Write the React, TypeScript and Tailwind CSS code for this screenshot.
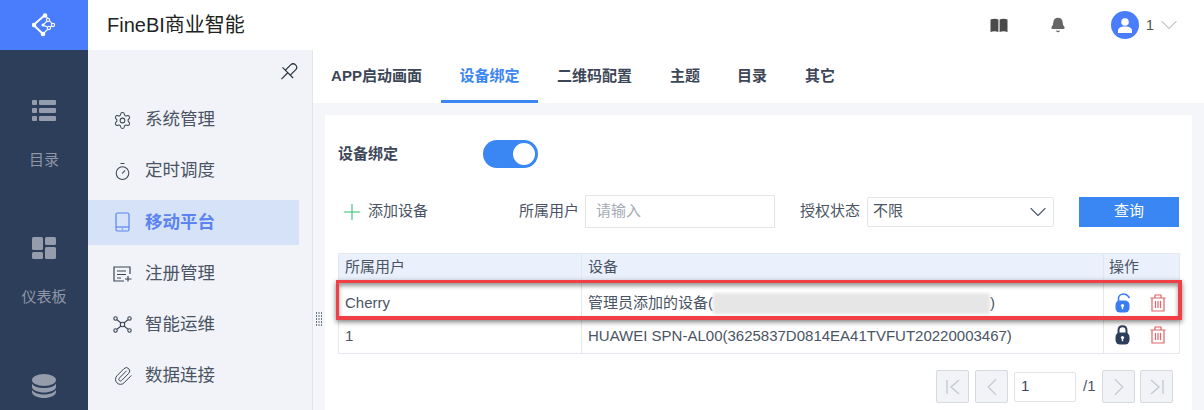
import { ReactNode } from 'react';
import { Bell, ChevronDown, ChevronLeft, ChevronRight, Plus, Settings, Timer, Paperclip } from 'lucide-react';

const fontStack = "font-['Liberation_Sans','Noto_Sans_CJK_SC',sans-serif]";

function Logo() {
  return (
    <svg width="24" height="24" viewBox="0 0 24 24" fill="none" stroke="#fff" strokeWidth="1.1">
      <path d="M13 2 L1.5 12 L11 21" strokeWidth="2" />
      <path d="M13 2 L21 12 L17 15 L11 21 M16 7 L11 12 L17 15" />
      <circle cx="13" cy="2.5" r="2.3" fill="#fff" stroke="none" />
      <circle cx="2" cy="12" r="2.3" fill="#fff" stroke="none" />
      <circle cx="11" cy="21" r="2.3" fill="#fff" stroke="none" />
      <circle cx="11" cy="12" r="1.5" fill="#fff" stroke="none" />
      <circle cx="16" cy="7" r="1.6" fill="#4a7dfc" />
      <circle cx="21" cy="12" r="1.6" fill="#4a7dfc" />
      <circle cx="17" cy="15" r="1.6" fill="#4a7dfc" />
    </svg>
  );
}

function ListIcon() {
  return (
    <svg width="24" height="21" viewBox="0 0 24 21" fill="#959cab">
      <rect x="0" y="0" width="5" height="5" rx="1" />
      <rect x="7" y="0" width="17" height="5" rx="1" />
      <rect x="0" y="8" width="5" height="5" rx="1" />
      <rect x="7" y="8" width="17" height="5" rx="1" />
      <rect x="0" y="16" width="5" height="5" rx="1" />
      <rect x="7" y="16" width="17" height="5" rx="1" />
    </svg>
  );
}

function BoardIcon() {
  return (
    <svg width="24" height="22" viewBox="0 0 24 22" fill="#959cab">
      <rect x="0" y="0" width="11" height="13" rx="1.5" />
      <rect x="13" y="0" width="11" height="8" rx="1.5" />
      <rect x="0" y="15" width="11" height="7" rx="1.5" />
      <rect x="13" y="10" width="11" height="12" rx="1.5" />
    </svg>
  );
}

function DbIcon() {
  return (
    <svg width="24" height="24" viewBox="0 0 24 24" fill="#959cab">
      <ellipse cx="12" cy="6" rx="12" ry="6" />
      <path d="M0 9.5 C2 13 7 14 12 14 C17 14 22 13 24 9.5 V13 C24 16 18 18.5 12 18.5 C6 18.5 0 16 0 13 Z" />
      <path d="M0 16 C2 19 7 20.5 12 20.5 C17 20.5 22 19 24 16 V18 C24 21.5 18 24 12 24 C6 24 0 21.5 0 18 Z" />
    </svg>
  );
}

function BookIcon() {
  return (
    <svg width="18" height="15" viewBox="0 0 18 15" fill="#4a4a4a">
      <path d="M0.5 1.5 C3 0.5 6 0.5 8.4 1.5 V14 C6 13 3 13 0.5 14 Z" />
      <path d="M9.6 1.5 C12 0.5 15 0.5 17.5 1.5 V14 C15 13 12 13 9.6 14 Z" />
    </svg>
  );
}

function PinIcon() {
  return (
    <svg width="19" height="20" viewBox="0 0 19 20" fill="none" stroke="#2c3444" strokeWidth="1.2">
      <g transform="rotate(45 9.5 10)">
        <path d="M6 11 V3.5 C6 1.5 7.5 0 9.5 0 C11.5 0 13 1.5 13 3.5 V11" />
        <path d="M2 11 H17 M9.5 11 V20" />
      </g>
    </svg>
  );
}

function PhoneIcon() {
  return (
    <svg width="15" height="20" viewBox="0 0 15 20" fill="none" stroke="#5b84f0" strokeWidth="1.2">
      <rect x="1" y="1" width="13" height="18" rx="1.5" />
      <path d="M1 15 H14" />
      <circle cx="7.5" cy="17" r="0.8" fill="#5b84f0" stroke="none" />
    </svg>
  );
}

function RegisterIcon() {
  return (
    <svg width="19" height="16" viewBox="0 0 19 16" fill="none" stroke="#3c4657" strokeWidth="1.2">
      <path d="M17 8 V1 H1 V15 H11" />
      <path d="M4 5 H13 M4 8.5 H13 M4 12 H8" />
      <path d="M15 10 V15.5 M12 13 H18.5" />
    </svg>
  );
}

function OpsIcon() {
  return (
    <svg width="19" height="17" viewBox="0 0 19 17" fill="none" stroke="#3c4657" strokeWidth="1.1">
      <circle cx="2.5" cy="2.5" r="1.7" />
      <circle cx="16.5" cy="2.5" r="1.7" />
      <circle cx="2.5" cy="14.5" r="1.7" />
      <circle cx="16.5" cy="14.5" r="1.7" />
      <circle cx="9.5" cy="8.5" r="2.2" />
      <path d="M4 3.8 L8 7 M15 3.8 L11 7 M4 13.2 L8 10 M15 13.2 L11 10" />
    </svg>
  );
}

function Grip() {
  return (
    <svg width="6" height="15" viewBox="0 0 6 15" fill="#6b7280">
      {[0, 3, 6, 9, 12].map((y) => (
        <g key={y}>
          <rect x="0" y={y} width="1" height="2" />
          <rect x="2.5" y={y} width="1" height="2" />
          <rect x="5" y={y} width="1" height="2" />
        </g>
      ))}
    </svg>
  );
}

function LockIcon({ open, color }: { open?: boolean; color: string }) {
  return (
    <svg width="17" height="20" viewBox="0 0 17 20" fill="none">
      {open ? (
        <path d="M4.5 9 V5.5 C4.5 3 6.5 1 9.5 1 C12 1 14 2.5 15.5 5" stroke={color} strokeWidth="1.6" />
      ) : (
        <path d="M4.5 9 V5.5 C4.5 3 6 1.2 8.5 1.2 C11 1.2 12.5 3 12.5 5.5 V9" stroke={color} strokeWidth="2" />
      )}
      <rect x="1.5" y="7.5" width="14" height="12" rx="4.5" fill={color} />
      <circle cx="8.5" cy="12.5" r="1.6" fill="#fff" />
      <rect x="7.8" y="13" width="1.4" height="3.2" fill="#fff" />
    </svg>
  );
}

function TrashIcon() {
  return (
    <svg width="16" height="18" viewBox="0 0 16 18" fill="none" stroke="#e0656a" strokeWidth="1.2">
      <path d="M0.5 4 H15.5 M5 4 V1 H11 V4" />
      <path d="M2 4 V17 H14 V4" />
      <path d="M5.5 7 V14 M8 7 V14 M10.5 7 V14" />
    </svg>
  );
}

function PageFirst({ flip }: { flip?: boolean }) {
  return (
    <svg width="16" height="16" viewBox="0 0 16 16" fill="none" stroke="#c3c8d2" strokeWidth="1.3" className={flip ? 'rotate-180' : ''}>
      <path d="M2 1 V15 M14 1 L6 8 L14 15" />
    </svg>
  );
}

const menu: { label: string; icon: ReactNode; active?: boolean }[] = [
  { label: '系统管理', icon: <Settings size={19} strokeWidth={1.3} color="#3c4657" /> },
  { label: '定时调度', icon: <Timer size={19} strokeWidth={1.3} color="#3c4657" /> },
  { label: '移动平台', icon: <PhoneIcon />, active: true },
  { label: '注册管理', icon: <RegisterIcon /> },
  { label: '智能运维', icon: <OpsIcon /> },
  { label: '数据连接', icon: <Paperclip size={20} strokeWidth={1.2} color="#3c4657" /> },
];

const tabs = [
  { label: 'APP启动画面', pad: 'ml-[18px] w-[91px]' },
  { label: '设备绑定', pad: 'ml-[19px] w-[97px]', active: true },
  { label: '二维码配置', pad: 'ml-[19px] w-[75px]' },
  { label: '主题', pad: 'ml-[38px] w-[30px]' },
  { label: '目录', pad: 'ml-[37px] w-[30px]' },
  { label: '其它', pad: 'ml-[38px] w-[30px]' },
];

function PageBtn({ children }: { children: ReactNode }) {
  return (
    <div className="w-[33px] h-[33px] flex items-center justify-center rounded-[2px] border border-[#d5d9e0] bg-[#f1f3f7]">
      {children}
    </div>
  );
}

export default function App() {
  return (
    <div className={`${fontStack} w-[1204px] h-[410px] overflow-hidden flex bg-white text-[#3c4657]`}>
      {/* dark rail */}
      <aside className="w-[88px] shrink-0 bg-[#2c3e5a] flex flex-col items-center">
        <div className="w-full h-[50px] bg-[#4a7dfc] flex items-center justify-center">
          <Logo />
        </div>
        <div className="mt-[50px] flex flex-col items-center">
          <ListIcon />
          <span className="mt-[29px] text-[15px] leading-[20px] text-[#8f96a5]">目录</span>
        </div>
        <div className="mt-[67px] flex flex-col items-center">
          <BoardIcon />
          <span className="mt-[28px] text-[15px] leading-[20px] text-[#8f96a5]">仪表板</span>
        </div>
        <div className="mt-[67px]">
          <DbIcon />
        </div>
      </aside>

      <div className="flex-1 flex flex-col min-w-0">
        {/* header */}
        <header className="h-[50px] shrink-0 flex items-center pl-[19px] bg-white">
          <span className="text-[20px] text-[#222]">FineBI商业智能</span>
          <span className="ml-auto"><BookIcon /></span>
          <Bell size={16} fill="#666" color="#666" className="ml-[42px]" />
          <div className="ml-[45px] w-[28px] h-[28px] rounded-full bg-[#4a7dfc] flex items-center justify-center">
            <svg width="14" height="15" viewBox="0 0 14 15" fill="#fff">
              <circle cx="7" cy="4" r="3.8" />
              <path d="M0 15 V12.5 C0 10 3 8.5 7 8.5 C11 8.5 14 10 14 12.5 V15 Z" />
            </svg>
          </div>
          <span className="ml-[7px] text-[15px] text-[#555]">1</span>
          <ChevronDown size={28} strokeWidth={0.8} color="#999" className="ml-[1px] mr-[21px]" />
        </header>

        <div className="flex-1 flex min-h-0">
          {/* menu */}
          <nav className="w-[224px] shrink-0 bg-[#f1f3f8] flex flex-col">
            <div className="h-[47.6px] flex items-start justify-end pr-[14px] pt-[12px]">
              <PinIcon />
            </div>
            <ul className="flex flex-col gap-[6.2px]">
              {menu.map((m) => (
                <li
                  key={m.label}
                  className={`h-[45px] w-[211px] flex items-center ${m.active ? 'bg-[#d6e2f8]' : ''}`}
                >
                  <span className="w-[57px] flex justify-center pl-[12px]">{m.icon}</span>
                  <span className={`text-[17.5px] ${m.active ? 'font-bold text-[#5b84f0]' : 'pb-[2px] text-[#4a5464]'}`}>
                    {m.label}
                  </span>
                </li>
              ))}
            </ul>
          </nav>

          {/* resize strip */}
          <div className="w-[1px] bg-[#e3e5ea] relative">
            <div className="absolute left-[4px] top-[262px]">
              <Grip />
            </div>
          </div>

          {/* main */}
          <main className="flex-1 min-w-0 flex flex-col bg-[#f5f6f9]">
            <div className="h-[53px] shrink-0 bg-white flex items-stretch">
              {tabs.map((t) => (
                <div
                  key={t.label}
                  className={`${t.pad} h-full flex items-center justify-center whitespace-nowrap text-[15px] font-bold ${
                    t.active ? 'text-[#3a86f2] border-b-[3px] border-[#3a86f2] pt-[3px]' : 'text-[#3c4657]'
                  }`}
                >
                  {t.label}
                </div>
              ))}
            </div>

            <div className="mt-[12px] ml-[12px] mr-[12px] flex-1 bg-white pl-[13px] pr-[13px] relative">
              <div className="h-[28px] mt-[25px] flex items-center">
                <span className="w-[145px] text-[15px] font-bold text-[#3c4657]">设备绑定</span>
                <div className="w-[55px] h-[28px] rounded-full bg-[#3a86f2] flex items-center justify-end pr-[3px]">
                  <div className="w-[22px] h-[22px] rounded-full bg-white" />
                </div>
              </div>

              <div className="mt-[27px] h-[33px] flex items-center relative">
                <Plus size={26} strokeWidth={1} color="#2fbf71" className="ml-[1px]" />
                <span className="ml-[3px] text-[15px] text-[#4a5464]">添加设备</span>
                <span className="ml-[91px] text-[15px] text-[#4a5464]">所属用户</span>
                <div className="ml-[6px] w-[190px] h-[33px] border border-[#e3e5ea] flex items-center pl-[10px] text-[15px] text-[#a5abb6]">
                  请输入
                </div>
                <span className="ml-[25px] text-[15px] text-[#4a5464]">授权状态</span>
                <div className="ml-[7px] w-[187px] h-[30px] border border-[#e3e5ea] rounded-[2px] flex items-center pl-[5px] pr-[1px] text-[15px] text-[#4a5464]">
                  不限
                  <ChevronDown size={28} strokeWidth={1} color="#555e6e" className="ml-auto" />
                </div>
                <button className="ml-[25px] w-[100px] h-[30px] bg-[#3a86f2] text-white text-[15px]">查询</button>
              </div>

              <table className="mt-[25px] w-[841px] table-fixed border-collapse text-[15px] text-[#4a5464]">
                <colgroup>
                  <col className="w-[243px]" />
                  <col className="w-[522px]" />
                  <col className="w-[76px]" />
                </colgroup>
                <thead>
                  <tr className="h-[28px] bg-[#eaf1fc]">
                    <th className="border border-[#e3e7ee] px-[6px] text-left font-normal">所属用户</th>
                    <th className="border border-[#e3e7ee] px-[6px] text-left font-normal">设备</th>
                    <th className="border border-[#e3e7ee] px-[5px] text-left font-normal">操作</th>
                  </tr>
                </thead>
                <tbody>
                  <tr className="h-[38px]">
                    <td className="border border-[#e3e7ee] px-[6px] pt-[5px]">Cherry</td>
                    <td className="border border-[#e3e7ee] px-[6px] pt-[5px] whitespace-nowrap">
                      <span className="inline-flex items-center">
                        管理员添加的设备(
                        <span className="inline-block w-[277px] h-[21px] bg-[#e6e6e6] blur-[1.5px]" />
                        )
                      </span>
                    </td>
                    <td className="border border-[#e3e7ee] pl-[10px] pt-[5px]">
                      <div className="flex items-center gap-[19px]">
                        <LockIcon open color="#3a7df2" />
                        <TrashIcon />
                      </div>
                    </td>
                  </tr>
                  <tr className="h-[34px]">
                    <td className="border border-[#e3e7ee] px-[6px]">1</td>
                    <td className="border border-[#e3e7ee] px-[6px] whitespace-nowrap">
                      HUAWEI SPN-AL00(3625837D0814EA41TVFUT20220003467)
                    </td>
                    <td className="border border-[#e3e7ee] pl-[10px] pb-[3px]">
                      <div className="flex items-center gap-[19px]">
                        <LockIcon color="#2c3e5a" />
                        <TrashIcon />
                      </div>
                    </td>
                  </tr>
                </tbody>
              </table>

              {/* red annotation box */}
              <div className="absolute left-[11px] top-[165px] w-[846px] h-[40px] border-[3px] border-r-4 border-b-4 border-[#f04045] shadow-[0_2px_5px_rgba(0,0,0,0.5),inset_0_3px_4px_rgba(0,0,0,0.4)]" />

              <div className="mt-[16px] flex items-center justify-end pr-[6px] text-[15px]">
                <PageBtn><PageFirst /></PageBtn>
                <div className="ml-[6px]"><PageBtn><ChevronLeft size={30} strokeWidth={0.9} color="#c3c8d2" /></PageBtn></div>
                <div className="ml-[6px] w-[62px] h-[30px] border border-[#e3e5ea] rounded-[2px] flex items-center pl-[6px] text-[#3c4657]">1</div>
                <span className="ml-[7px] w-[13px] text-[#4a5464]">/1</span>
                <div className="ml-[6px]"><PageBtn><ChevronRight size={30} strokeWidth={0.9} color="#c3c8d2" /></PageBtn></div>
                <div className="ml-[5px]"><PageBtn><PageFirst flip /></PageBtn></div>
              </div>
            </div>
          </main>
        </div>
      </div>
    </div>
  );
}
